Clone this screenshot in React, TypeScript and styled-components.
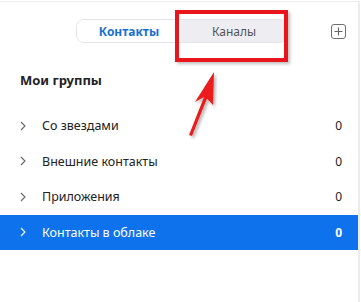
import React from "react";
import styled, { createGlobalStyle } from "styled-components";

const GlobalStyle = createGlobalStyle`
  html, body {
    margin: 0;
    padding: 0;
    background: #ffffff;
  }
  body {
    font-family: "Noto Sans", "Open Sans", sans-serif;
  }
`;

const Panel = styled.div`
  position: relative;
  width: 358px;
  height: 300px;
  border-top: 1px solid #ececec;
  border-right: 2px solid #ececec;
  margin-top: 1px;
  background: #fff;
  overflow: hidden;
`;

const Toolbar = styled.div`
  display: flex;
  align-items: center;
  height: 24px;
  padding: 17px 12px 0 76px;
`;

const Tabs = styled.div`
  display: flex;
  height: 24px;
  border: 1px solid #e3e3e8;
  border-radius: 8px;
  overflow: hidden;
  box-sizing: border-box;
`;

const Tab = styled.div<{ $active?: boolean }>`
  display: flex;
  align-items: center;
  justify-content: center;
  width: ${(p) => (p.$active ? "104px" : "106px")};
  font-size: 12px;
  font-weight: ${(p) => (p.$active ? 700 : 400)};
  color: ${(p) => (p.$active ? "#1a6fd1" : "#555")};
  background: ${(p) => (p.$active ? "#fff" : "#ededf2")};
`;

const AddButton = styled.div`
  margin-left: auto;
  width: 13px;
  height: 13px;
  border: 1px solid #6e6e6e;
  border-radius: 3px;
  display: flex;
  align-items: center;
  justify-content: center;
`;

const Heading = styled.div`
  padding: 28px 0 0 20px;
  height: 46px;
  box-sizing: border-box;
  font-size: 13px;
  font-weight: 700;
  color: #222;
`;

const List = styled.div`
  margin-top: 19px;
  display: flex;
  flex-direction: column;
`;

const Row = styled.div<{ $selected?: boolean }>`
  display: flex;
  align-items: center;
  height: 35.5px;
  padding: 0 16px 0 20px;
  background: ${(p) => (p.$selected ? "#0e72ed" : "transparent")};
  color: ${(p) => (p.$selected ? "#fff" : "#222")};
  font-size: 12.5px;
`;

const Chevron = styled.span`
  display: flex;
  width: 22px;
`;

const Label = styled.span`
  flex: 1;
`;

const Count = styled.span<{ $selected?: boolean }>`
  font-weight: ${(p) => (p.$selected ? 700 : 400)};
  font-size: 12px;
`;

const Highlight = styled.div`
  position: absolute;
  left: 175px;
  top: 8px;
  width: 113px;
  height: 52px;
  border: 4px solid #e8161b;
  box-sizing: border-box;
  box-shadow: 2px 2px 3px rgba(0, 0, 0, 0.25);
`;

const Arrow = styled.svg`
  position: absolute;
  left: 180px;
  top: 66px;
  overflow: visible;
`;

const groups = [
  { name: "Со звездами", count: 0 },
  { name: "Внешние контакты", count: 0 },
  { name: "Приложения", count: 0 },
  { name: "Контакты в облаке", count: 0, selected: true },
];

function ChevronIcon({ color }: { color: string }) {
  return (
    <svg width="6" height="10" viewBox="0 0 6 10">
      <path d="M1 1 L5 5 L1 9" fill="none" stroke={color} strokeWidth="1.1" />
    </svg>
  );
}

export default function App() {
  return (
    <>
      <GlobalStyle />
      <Panel>
        <Toolbar>
          <Tabs>
            <Tab $active>Контакты</Tab>
            <Tab>Каналы</Tab>
          </Tabs>
          <AddButton>
            <svg width="9" height="9" viewBox="0 0 9 9">
              <path d="M4.5 0.5 V8.5 M0.5 4.5 H8.5" stroke="#666" strokeWidth="1.2" />
            </svg>
          </AddButton>
        </Toolbar>
        <Heading>Мои группы</Heading>
        <List>
          {groups.map((g) => (
            <Row key={g.name} $selected={g.selected}>
              <Chevron>
                <ChevronIcon color={g.selected ? "#fff" : "#666"} />
              </Chevron>
              <Label>{g.name}</Label>
              <Count $selected={g.selected}>{g.count}</Count>
            </Row>
          ))}
        </List>
        <Highlight />
        <Arrow width="40" height="72" viewBox="0 0 40 72">
          <defs>
            <filter id="sh" x="-50%" y="-50%" width="200%" height="200%">
              <feDropShadow dx="2" dy="2" stdDeviation="1.5" floodColor="#000" floodOpacity="0.3" />
            </filter>
          </defs>
          <g filter="url(#sh)">
            <path d="M34 4 L33 37 L27 30.5 L12 68 L9 67 L24 29 L15 34 Z" fill="#ec1a1a" />
          </g>
        </Arrow>
      </Panel>
    </>
  );
}
